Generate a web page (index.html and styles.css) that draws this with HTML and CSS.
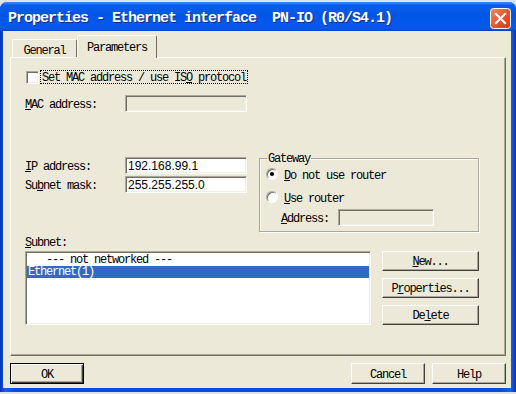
FILE: index.html
```html
<!DOCTYPE html>
<html lang="en">
<head>
  <meta charset="UTF-8">
  <title>Properties - Ethernet interface</title>
  <link rel="stylesheet" href="styles.css">
</head>
<body>

<div class="window">
  <div class="titlebar">
    <span class="title">Properties - Ethernet interface&nbsp; PN-IO (R0/S4.1)</span>
    <span class="close">
      <svg width="21" height="21" viewBox="0 0 21 21">
        <defs>
          <linearGradient id="red" x1="0" y1="0" x2="1" y2="1">
            <stop offset="0" stop-color="#f08a63"/>
            <stop offset="0.5" stop-color="#e15a30"/>
            <stop offset="1" stop-color="#c3401a"/>
          </linearGradient>
        </defs>
        <rect x="0.5" y="0.5" width="20" height="20" rx="3" fill="url(#red)" stroke="#fff"/>
        <path d="M6 6 L15 15 M15 6 L6 15" stroke="#fff" stroke-width="2.2" stroke-linecap="square"/>
      </svg>
    </span>
  </div>

  <div class="client">
    <div class="tabs">
      <div class="tab">General</div>
      <div class="tab active">Parameters</div>
    </div>

    <div class="panel">
      <div class="check-row">
        <span class="checkbox"></span>
        <span class="focus">Set MAC address / use IS<u>O</u> protocol</span>
      </div>

      <div class="field mac">
        <label><u>M</u>AC address:</label>
        <span class="input disabled"></span>
      </div>

      <div class="middle">
        <div class="ip-col">
          <div class="field"><label><u>I</u>P address:</label><span class="input">192.168.99.1</span></div>
          <div class="field"><label>Su<u>b</u>net mask:</label><span class="input">255.255.255.0</span></div>
        </div>
        <fieldset class="gateway">
          <legend>Gateway</legend>
          <div class="radio-row first"><span class="radio on"></span><span class="txt"><u>D</u>o not use router</span></div>
          <div class="radio-row second"><span class="radio"></span><span class="txt"><u>U</u>se router</span></div>
          <div class="addr-row"><label><u>A</u>ddress:</label><span class="input disabled small"></span></div>
        </fieldset>
      </div>

      <div class="subnet-label"><u>S</u>ubnet:</div>
      <div class="subnet">
        <div class="listbox">
          <div class="item indent">--- not networked ---</div>
          <div class="item selected">Ethernet(1)</div>
        </div>
        <div class="side-buttons">
          <button><u>N</u>ew...</button>
          <button>P<u>r</u>operties...</button>
          <button>De<u>l</u>ete</button>
        </div>
      </div>
    </div>

    <div class="footer">
      <button class="default">OK</button>
      <span class="spacer"></span>
      <button>Cancel</button>
      <button>Help</button>
    </div>
  </div>
</div>

</body>
</html>
```

FILE: styles.css
```css
body { margin:0; background:#dde2ec; color:#000; font:12px/12px "Liberation Mono", monospace; letter-spacing:-1.2px; }
u { text-decoration:underline; text-underline-offset:1px; }

.window { margin-top:2px; width:516px; height:390px; box-sizing:border-box; padding-bottom:4px; background:linear-gradient(90deg, #0831b8, #1660e8 1%, #0b4bd6 3%, #0b4bd6 97%, #1660e8 99%, #0831b8); border-radius:7px 7px 0 0; display:flex; flex-direction:column; }

/* title bar */
.titlebar { height:29px; box-sizing:border-box; padding:4px 5px 0 8px; display:flex; align-items:center; border-radius:7px 7px 0 0; background:linear-gradient(#3d8af7, #0a5ee9 12%, #0055e5 45%, #0259ea 80%, #0a58e0 92%, #0042c8); }
.title { flex:1; color:#fff; font:bold 15px/16px "Liberation Mono", monospace; letter-spacing:-1px; text-shadow:1px 1px 0 #0b2a90; white-space:nowrap; padding-top:1px; }
.close { width:21px; height:21px; display:flex; margin-top:-1px; }

/* dialog body */
.client { flex:1; margin:0 5px 0 3px; padding:4px 5px 0 7px; background:#ece9d8; display:flex; flex-direction:column; }

.tabs { height:22px; padding-left:2px; display:flex; align-items:flex-end; }
.tab { height:18px; width:65px; box-sizing:border-box; padding-top:5px; border:1px solid; border-bottom:none; border-color:#fff #716f64 transparent #fff; border-radius:2px 2px 0 0; display:flex; align-items:center; justify-content:center; }
.tab.active { height:23px; width:80px; padding-top:2px; margin-bottom:-1px; position:relative; background:#ece9d8; }

.panel { height:299px; box-sizing:border-box; padding:12px 0 0 14px; border:1px solid; border-color:#fff #716f64 #716f64 #fff; box-shadow:inset -1px -1px 0 #aca899; }

.check-row { height:14px; margin-left:1px; display:flex; align-items:center; }
.checkbox, .input, .listbox { box-sizing:border-box; background:#fff; border:1px solid; border-color:#aca899 #fff #fff #aca899; box-shadow:inset 1px 1px 0 #716f64, inset -1px -1px 0 #f1efe2; }
.checkbox { width:13px; height:13px; }
.focus { margin-left:1px; padding:2px 1px 0; line-height:10px; border:1px dotted #000; }

.field { height:17px; display:flex; align-items:center; }
.field label { width:100px; padding-top:3px; }
.mac { margin-top:11px; }
.input { width:122px; height:17px; padding:1px 2px 0; font:12px/15px "Liberation Sans", sans-serif; letter-spacing:0; }
.input.disabled { background:#ece9d8; }
.input.small { width:96px; }

.middle { margin-top:39px; display:flex; align-items:flex-start; }
.ip-col { margin-top:6px; display:flex; flex-direction:column; gap:2px; }

.gateway { margin:0 0 0 12px; width:220px; box-sizing:border-box; padding:0 0 5px 6px; border:1px solid #aca899; box-shadow:1px 1px 0 #fff, inset 1px 1px 0 #fff; }
.gateway legend { margin-left:1px; padding:2px 1px 0; line-height:12px; }
.radio-row { height:12px; display:flex; align-items:center; gap:6px; }
.radio-row .txt { padding-top:3px; }
.radio-row.first { margin-top:3px; }
.radio-row.second { margin-top:11px; }
.radio { width:12px; height:12px; box-sizing:border-box; border-radius:50%; background:#fff; border:1px solid; border-color:#aca899 #fff #fff #aca899; box-shadow:inset 1px 1px 0 #716f64; display:flex; align-items:center; justify-content:center; }
.radio.on::after { content:""; width:4px; height:4px; border-radius:50%; background:#000; }
.addr-row { height:17px; margin-top:6px; margin-left:15px; display:flex; align-items:center; }
.addr-row label { width:57px; padding-top:3px; }

.subnet-label { margin-top:3px; padding-top:2px; height:12px; }
.subnet { margin-top:2px; display:flex; align-items:flex-start; }
.listbox { width:346px; height:74px; padding:2px 1px 1px; }
.item { height:12px; padding-left:1px; white-space:pre; }
.item.indent { padding-left:19px; }
.item.selected { background:#316ac5; color:#fff; }

button { font:inherit; letter-spacing:inherit; color:#000; padding:2px 0 0; background:#ece9d8; box-sizing:border-box; border:1px solid; border-color:#fff #404040 #404040 #fff; box-shadow:inset -1px -1px 0 #aca899; }
.side-buttons { margin-left:11px; display:flex; flex-direction:column; gap:7px; }
.side-buttons button { width:97px; height:20px; }

.footer { margin-top:7px; display:flex; gap:7px; }
.footer button { width:74px; height:21px; }
.footer button.default { border-color:#000; box-shadow:inset 1px 1px 0 #fff, inset -1px -1px 0 #404040, inset -2px -2px 0 #aca899; }
.spacer { flex:1; }
```
